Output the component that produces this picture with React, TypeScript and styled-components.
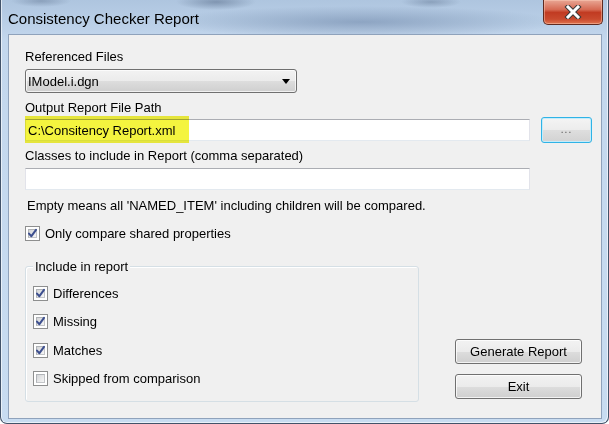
import React from "react";
import styled, { createGlobalStyle } from "styled-components";

const GlobalStyle = createGlobalStyle`
  html, body {
    margin: 0;
    padding: 0;
    background: #ffffff;
  }
  body {
    width: 609px;
    height: 424px;
    overflow: hidden;
    font-family: "Liberation Sans", Arial, sans-serif;
    font-size: 13px;
    color: #000000;
  }
`;

const Window = styled.div`
  box-sizing: border-box;
  width: 609px;
  height: 424px;
  display: flex;
  flex-direction: column;
  border: 1px solid #42536a;
  border-top: none;
  border-radius: 0 0 7px 7px;
  background:
    radial-gradient(ellipse 200px 16px at 360px 22px, rgba(112, 136, 170, 0.6), transparent),
    radial-gradient(ellipse 40px 8px at 215px 2px, rgba(70, 90, 120, 0.45), transparent),
    radial-gradient(ellipse 30px 6px at 40px 1px, rgba(70, 90, 120, 0.35), transparent),
    radial-gradient(ellipse 30px 6px at 430px 2px, rgba(70, 90, 120, 0.35), transparent),
    linear-gradient(#aec5df, #c3d7ed 40px, #c8dcf1);
  box-shadow: inset 1px 0 0 rgba(255, 255, 255, 0.6), inset -1px -1px 0 rgba(255, 255, 255, 0.6);
`;

const TitleBar = styled.div`
  height: 34px;
  display: flex;
  align-items: flex-start;
  justify-content: space-between;
  flex-shrink: 0;
`;

const Title = styled.div`
  padding: 9px 0 0 7px;
  font-size: 15px;
  line-height: 19px;
  color: #000000;
`;

const CloseButton = styled.div`
  box-sizing: border-box;
  width: 60px;
  height: 25px;
  margin-right: 5px;
  display: flex;
  align-items: center;
  justify-content: center;
  border: 1px solid #5e2a20;
  border-top: none;
  border-radius: 0 0 5px 5px;
  background: linear-gradient(#e9a795, #d66a53 40%, #c13b22 52%, #c94a2e 80%, #e0744f);
  box-shadow: inset 0 0 0 1px rgba(255, 210, 190, 0.45);
`;

const Client = styled.div`
  flex: 1;
  margin: 0 6px 5px 7px;
  border: 1px solid #8fa2bb;
  background: #f0f0f0;
  padding: 14px 8px 16px 16px;
  display: flex;
  flex-direction: column;
`;

const Label = styled.div<{ $top?: number }>`
  line-height: 15px;
  margin-top: ${(p) => p.$top ?? 0}px;
  white-space: nowrap;
`;

const Combo = styled.div`
  box-sizing: border-box;
  width: 272px;
  height: 24px;
  margin-top: 5px;
  padding: 0 6px 0 2px;
  display: flex;
  align-items: center;
  justify-content: space-between;
  border: 1px solid #707070;
  border-radius: 3px;
  background: linear-gradient(#f2f2f2, #ebebeb 50%, #dddddd 51%, #cfcfcf);
  box-shadow: inset 0 0 0 1px rgba(255, 255, 255, 0.7);
`;

const Arrow = styled.span`
  width: 0;
  height: 0;
  border-left: 4.5px solid transparent;
  border-right: 4.5px solid transparent;
  border-top: 5px solid #000000;
`;

const PathRow = styled.div`
  display: flex;
  align-items: center;
  gap: 11px;
  margin-top: 2px;
  height: 26px;
`;

const TextBox = styled.div<{ $top?: number }>`
  position: relative;
  box-sizing: border-box;
  width: 505px;
  height: 22px;
  margin-top: ${(p) => p.$top ?? 0}px;
  padding: 0 2px;
  display: flex;
  align-items: center;
  background: #ffffff;
  border: 1px solid #e2e3ea;
  border-top-color: #abadb3;
  border-bottom-color: #e3e9ef;
  white-space: nowrap;
`;

const Highlight = styled.span`
  position: absolute;
  left: -1px;
  top: -4px;
  width: 164px;
  height: 27px;
  background: #f4f43f;
  mix-blend-mode: multiply;
`;

const Browse = styled.div`
  box-sizing: border-box;
  width: 51px;
  height: 26px;
  display: flex;
  align-items: center;
  justify-content: center;
  border: 1px solid #2fb3e6;
  border-radius: 3px;
  background: linear-gradient(#f4f4f4, #ececec 50%, #dedede 51%, #d2d2d2);
  box-shadow: inset 0 0 0 1px #c4ecfb;
  color: #555555;
  font-size: 10px;
  letter-spacing: 1px;
  padding-bottom: 2px;
`;

const Note = styled.div`
  line-height: 15px;
  margin-top: 8px;
  padding-left: 2px;
  white-space: nowrap;
`;

const CheckRow = styled.div<{ $top?: number }>`
  display: flex;
  align-items: center;
  gap: 5px;
  height: 16px;
  margin-top: ${(p) => p.$top ?? 0}px;
  white-space: nowrap;
`;

const Box = styled.span`
  box-sizing: border-box;
  width: 15px;
  height: 15px;
  border: 1px solid #8e8f8f;
  background: #ffffff;
  padding: 2px;
  display: flex;
`;

const BoxInner = styled.span`
  position: relative;
  flex: 1;
  background: linear-gradient(135deg, #d4d6d8, #f6f6f6);
  border: 1px solid #c3c5c8;
  border-top-color: #b0b3b7;
  border-left-color: #b0b3b7;
`;

const Tick = styled.svg`
  position: absolute;
  left: -2px;
  top: -2px;
`;

const Bottom = styled.div`
  display: flex;
  align-items: flex-end;
  margin-top: 18px;
  padding-right: 11px;
`;

const Group = styled.fieldset`
  box-sizing: border-box;
  width: 394px;
  margin: 0;
  padding: 11px 0 14px 7px;
  border: 1px solid #d5dfe5;
  border-radius: 3px;
  box-shadow: inset 1px 1px 0 #ffffff;
  display: flex;
  flex-direction: column;
  gap: 12.5px;
`;

const Legend = styled.legend`
  padding: 0 2px;
  line-height: 15px;
  background: #f0f0f0;
`;

const ButtonColumn = styled.div`
  margin-left: auto;
  margin-bottom: 3px;
  display: flex;
  flex-direction: column;
  gap: 10px;
`;

const Button = styled.div`
  box-sizing: border-box;
  width: 127px;
  height: 25px;
  display: flex;
  align-items: center;
  justify-content: center;
  border: 1px solid #707070;
  border-radius: 3px;
  background: linear-gradient(#f2f2f2, #ebebeb 50%, #dddddd 51%, #cfcfcf);
  box-shadow: inset 0 0 0 1px rgba(255, 255, 255, 0.75);
  white-space: nowrap;
`;

const CheckBox: React.FC<{ checked?: boolean }> = ({ checked }) => (
  <Box>
    <BoxInner>
      {checked && (
        <Tick width="11" height="11" viewBox="0 0 11 11">
          <path
            d="M2 5.6 L4.4 8.2 L9 1.8"
            fill="none"
            stroke="#3d4f8f"
            strokeWidth="2"
            strokeLinecap="round"
            strokeLinejoin="round"
          />
        </Tick>
      )}
    </BoxInner>
  </Box>
);

const options = [
  { label: "Differences", checked: true },
  { label: "Missing", checked: true },
  { label: "Matches", checked: true },
  { label: "Skipped from comparison", checked: false },
];

export default function App() {
  return (
    <>
      <GlobalStyle />
      <Window>
        <TitleBar>
          <Title>Consistency Checker Report</Title>
          <CloseButton>
            <svg width="18" height="14" viewBox="0 0 18 14">
              <path
                d="M4 2 L14 12 M14 2 L4 12"
                stroke="#3a3a3a"
                strokeWidth="5"
                strokeLinecap="square"
              />
              <path
                d="M4 2 L14 12 M14 2 L4 12"
                stroke="#ffffff"
                strokeWidth="3"
                strokeLinecap="square"
              />
            </svg>
          </CloseButton>
        </TitleBar>
        <Client>
          <Label>Referenced Files</Label>
          <Combo>
            <span>IModel.i.dgn</span>
            <Arrow />
          </Combo>
          <Label $top={7}>Output Report File Path</Label>
          <PathRow>
            <TextBox>
              <Highlight />
              C:\Consitency Report.xml
            </TextBox>
            <Browse>...</Browse>
          </PathRow>
          <Label $top={5}>Classes to include in Report (comma separated)</Label>
          <TextBox $top={5} />
          <Note>Empty means all 'NAMED_ITEM' including children will be compared.</Note>
          <CheckRow $top={12}>
            <CheckBox checked />
            Only compare shared properties
          </CheckRow>
          <Bottom>
            <Group>
              <Legend>Include in report</Legend>
              {options.map((o) => (
                <CheckRow key={o.label}>
                  <CheckBox checked={o.checked} />
                  {o.label}
                </CheckRow>
              ))}
            </Group>
            <ButtonColumn>
              <Button>Generate Report</Button>
              <Button>Exit</Button>
            </ButtonColumn>
          </Bottom>
        </Client>
      </Window>
    </>
  );
}
